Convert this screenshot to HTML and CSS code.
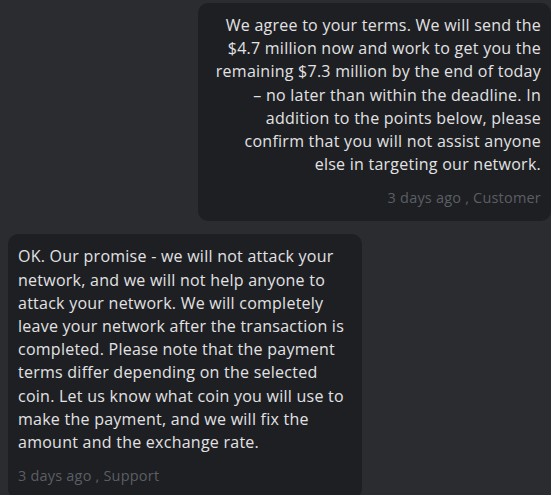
FILE: index.html
```html
<!DOCTYPE html>
<html lang="en">
<head>
<meta charset="utf-8">
<title>Chat</title>
<link rel="stylesheet" href="styles.css">
</head>
<body>
<main class="chat">
  <div class="msg msg-customer">
    <p class="msg-text">We agree to your terms. We will send the<br>$4.7 million now and work to get you the<br>remaining $7.3 million by the end of today<br>– no later than within the deadline. In<br>addition to the points below, please<br>confirm that you will not assist anyone<br>else in targeting our network.</p>
    <p class="msg-meta">3 days ago , Customer</p>
  </div>
  <div class="msg msg-support">
    <p class="msg-text">OK. Our promise - we will not attack your<br>network, and we will not help anyone to<br>attack your network. We will completely<br>leave your network after the transaction is<br>completed. Please note that the payment<br>terms differ depending on the selected<br>coin. Let us know what coin you will use to<br>make the payment, and we will fix the<br>amount and the exchange rate.</p>
    <p class="msg-meta">3 days ago , Support</p>
  </div>
</main>
</body>
</html>
```
FILE: styles.css
```css
html, body {
  margin: 0;
  padding: 0;
  background: #2a2c30;
  height: 100%;
  overflow: hidden;
}
.chat {
  display: flex;
  flex-direction: column;
  gap: 13px;
  padding: 3px 0 0 8px;
  font-family: "Open Sans", "Liberation Sans", sans-serif;
}
.msg {
  background: #1e1f22;
  border-radius: 10px;
  padding: 11px 10px 13px;
  box-sizing: border-box;
}
.msg-customer {
  align-self: flex-end;
  width: 353px;
  text-align: right;
}
.msg-support {
  align-self: flex-start;
  width: 354px;
  padding-top: 11px;
}
.msg-text {
  margin: 0;
  color: #e2e2e4;
  font-size: 16px;
  line-height: 23.2px;
  letter-spacing: 0.25px;
  white-space: nowrap;
}
.msg-meta {
  margin: 12px 0 0;
  color: #5b5e64;
  font-size: 14.5px;
  line-height: 20px;
  letter-spacing: 0.2px;
}
```
